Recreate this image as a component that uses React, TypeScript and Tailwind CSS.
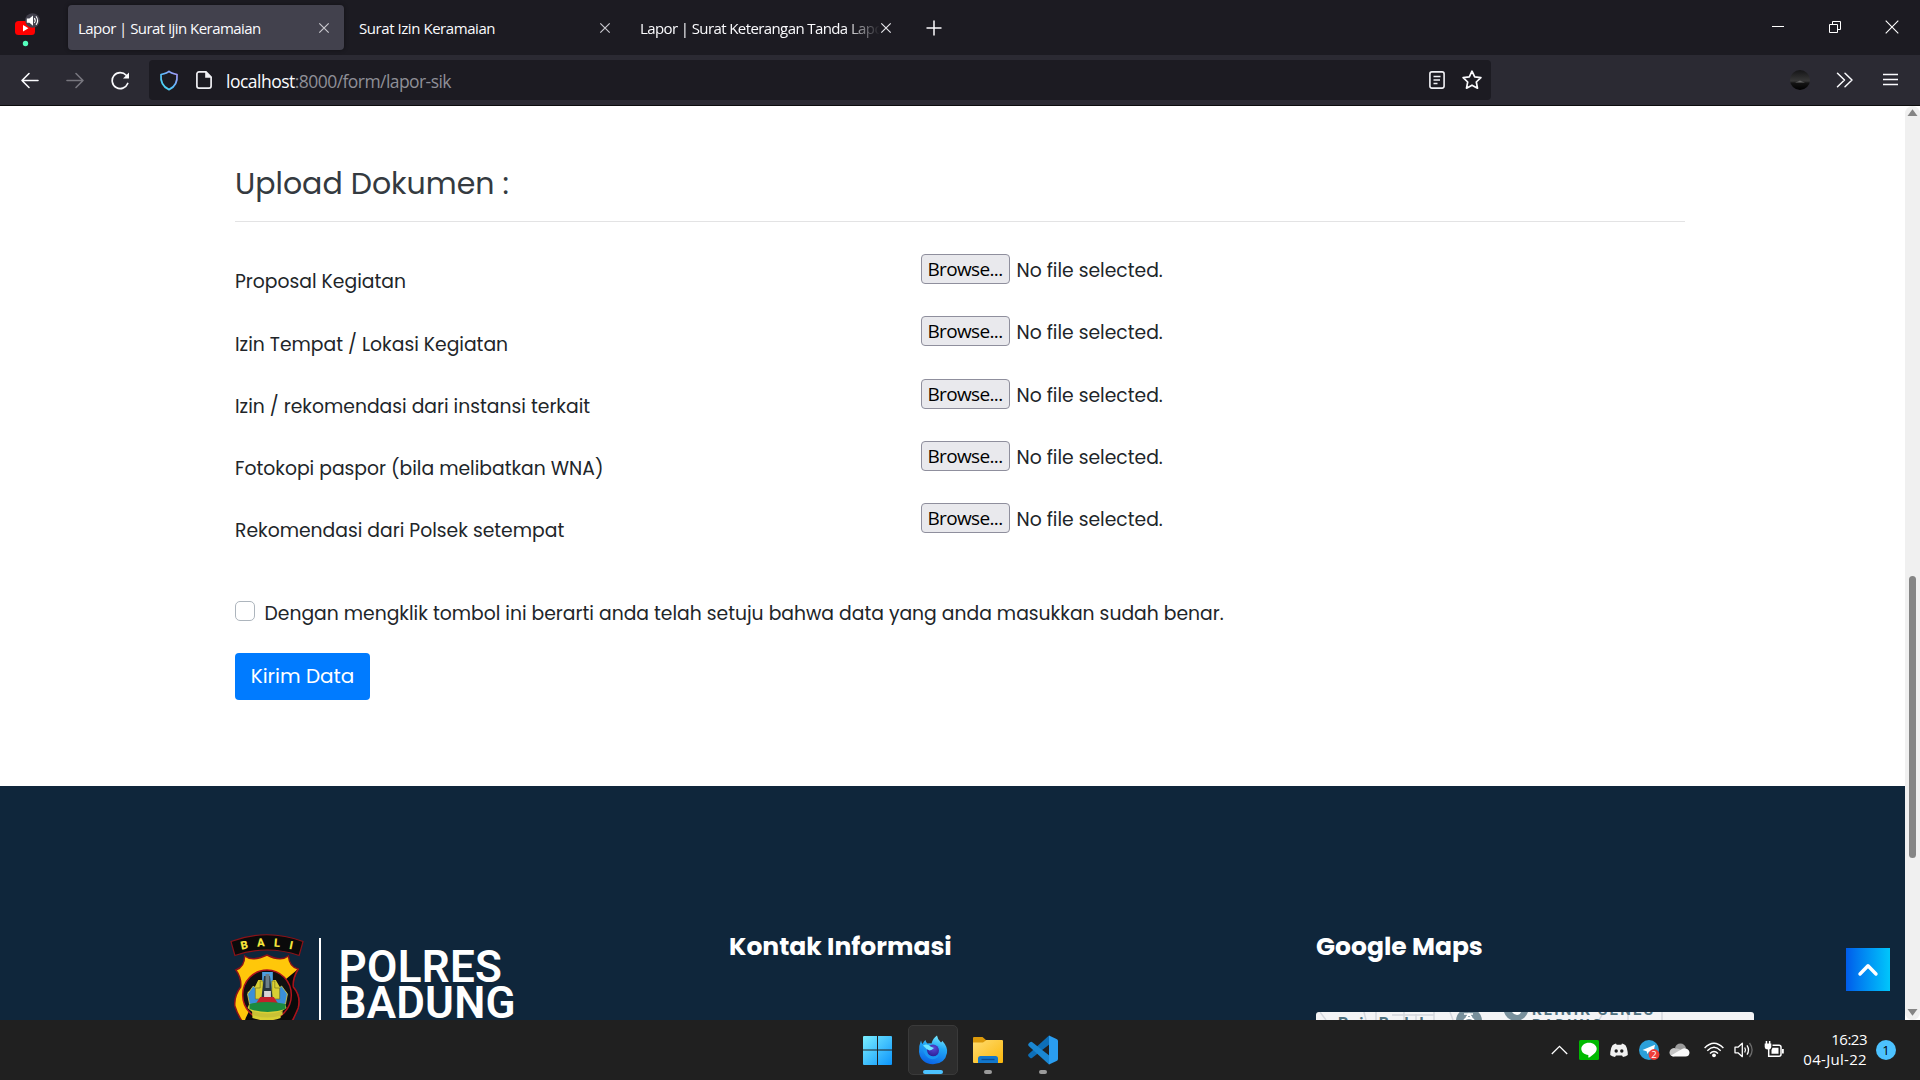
import type { ReactNode } from "react";

const pageFont = "font-['Poppins',Inter,sans-serif]";
const uiFont = "font-['Open_Sans','Noto_Sans',sans-serif]";

function CloseIcon({ className = "" }: { className?: string }) {
  return (
    <svg width="12" height="12" viewBox="0 0 12 12" className={className} fill="none" stroke="currentColor" strokeWidth="1.2">
      <path d="M1.3 1.3 10.7 10.7M10.7 1.3 1.3 10.7" />
    </svg>
  );
}

function TabBar() {
  return (
    <div className={`flex h-[55px] items-start bg-[#1c1b22] pt-[5px] text-[15px] leading-[45px] text-[#fbfbfe] ${uiFont}`}>
      <div className="flex h-[45px] w-[68px] shrink-0 pl-[14px]">
        <svg width="28" height="45" viewBox="0 0 28 45">
          <rect x="1" y="16" width="20" height="14" rx="3.5" fill="#f00" />
          <path d="M9 20v6.4l5.4-3.2z" fill="#fff" />
          <circle cx="18.5" cy="15.5" r="7.3" fill="#42414d" />
          <path d="M12.8 13.4h2.6l3.6-3v10.4l-3.6-3h-2.6z" fill="#fff" />
          <path d="M20.3 13.2q1.8 2.4 0 4.8M22 11.2q3.2 4.4 0 8.7" fill="none" stroke="#fff" strokeWidth="1.1" />
          <circle cx="11.5" cy="38.5" r="2.7" fill="#54ffbd" />
        </svg>
      </div>
      <div className="flex h-[45px] w-[276px] shrink-0 items-center rounded-[4px] bg-[#42414d] pl-[10px] pr-[14px] shadow-[0_0_4px_rgba(0,0,0,0.4)]">
        <span className="flex-1 whitespace-nowrap pt-[2px] tracking-[-0.55px]">Lapor | Surat Ijin Keramaian</span>
        <CloseIcon className="text-[#c9c8ce]" />
      </div>
      <div className="flex h-[45px] w-[281px] shrink-0 items-center pl-[15px] pr-[14px]">
        <span className="flex-1 whitespace-nowrap pt-[2px] tracking-[-0.44px]">Surat Izin Keramaian</span>
        <CloseIcon className="text-[#c9c8ce]" />
      </div>
      <div className="flex h-[45px] w-[267px] shrink-0 items-center pl-[15px]">
        <span className="w-[240px] overflow-hidden whitespace-nowrap pt-[2px] tracking-[-0.6px] [mask-image:linear-gradient(to_right,black_205px,transparent_240px)]">
          Lapor | Surat Keterangan Tanda Lapor
        </span>
        <CloseIcon className="ml-px shrink-0 text-[#e6e6ea]" />
      </div>
      <div className="flex h-[45px] flex-1 items-center pl-[34px]">
        <svg width="16" height="16" viewBox="0 0 16 16" stroke="#fbfbfe" strokeWidth="1.5">
          <path d="M8 .5v15M.5 8h15" />
        </svg>
      </div>
      <div className="flex h-[44px] items-center gap-[44.5px] pr-[21px]">
        <svg width="12" height="14" viewBox="0 0 12 14" stroke="#fff"><path d="M0 6.5h12" /></svg>
        <svg width="12" height="14" viewBox="0 0 12 14" fill="none" stroke="#fff">
          <path d="M.5 4.5h8v8h-8zM3.500 4.500v-3h8v8h-3" />
        </svg>
        <svg width="14" height="14" viewBox="0 0 14 14" stroke="#fff" strokeWidth="1.1"><path d="M.7.7 13.300 13.300M13.300.7.7 13.300" /></svg>
      </div>
    </div>
  );
}

function Toolbar() {
  return (
    <div className={`flex h-[51px] items-center border-b border-[#0c0c0d] bg-[#2b2a33] ${uiFont}`}>
      <div className="flex w-[149px] shrink-0 items-center gap-[25.5px] pl-[20px]">
        <svg width="20" height="20" viewBox="0 0 20 20" fill="none" stroke="#fbfbfe" strokeWidth="1.6" strokeLinecap="round" strokeLinejoin="round">
          <path d="M18 10.500H2M9 3.500 2 10.500l7 7" />
        </svg>
        <svg width="20" height="20" viewBox="0 0 20 20" fill="none" stroke="#77767e" strokeWidth="1.6" strokeLinecap="round" strokeLinejoin="round">
          <path d="M1 10.500h16M10 3.500l7 7-7 7" />
        </svg>
        <svg width="20" height="20" viewBox="0 0 20 20" fill="none" stroke="#fbfbfe" strokeWidth="1.7" strokeLinecap="round">
          <path d="M15.200 5.300A8 8 0 1 0 16.700 13.500" />
          <path d="M18 2.500v6h-6z" fill="#fbfbfe" stroke="none" />
        </svg>
      </div>
      <div className="flex h-[40px] w-[1342px] shrink-0 items-center rounded-[4px] bg-[#1c1b22] pl-[10px] pr-[8px]">
        <svg width="20" height="21" viewBox="0 0 20 21" fill="none">
          <defs>
            <linearGradient id="shield" x1="0" y1="1" x2="1" y2="0">
              <stop offset="0" stopColor="#3fe1f0" />
              <stop offset=".5" stopColor="#5fb8fb" />
              <stop offset="1" stopColor="#b094f7" />
            </linearGradient>
          </defs>
          <path d="M10 1.300Q11.500 3.200 18 4.500C18.700 12 16 17 10 19.600C4 17 1.300 12 2 4.500Q8.500 3.200 10 1.300Z" stroke="url(#shield)" strokeWidth="1.700" strokeLinejoin="round" />
        </svg>
        <svg width="16" height="18" viewBox="0 0 16 18" className="ml-[17px]" fill="none">
          <path d="M3 .9h7l5.100 5.100v9a2.100 2.100 0 0 1-2.100 2.100H3A2.100 2.100 0 0 1 .9 15V3A2.100 2.100 0 0 1 3 .9Z" stroke="#f0f0f4" strokeWidth="1.700" />
          <path d="M9.200 0v6.800H16Z" fill="#f0f0f4" />
        </svg>
        <div className="ml-[14px] flex flex-1 whitespace-nowrap pt-[3px] text-[17.500px] leading-[37px]">
          <span className="tracking-[-0.5px] text-[#fbfbfe]">localhost</span>
          <span className="tracking-[-0.56px] text-[#8f8f97]">:8000/form/lapor-sik</span>
        </div>
        <svg width="16" height="18" viewBox="0 0 16 18" fill="none" stroke="#f0f0f4">
          <rect x=".9" y=".9" width="14.200" height="16.200" rx="2" strokeWidth="1.600" />
          <path d="M4.500 5.500h7M4.500 9h6.500M4.500 12.500h4" strokeWidth="1.400" />
        </svg>
        <svg width="22" height="22" viewBox="0 0 22 22" fill="none" className="ml-[16px]">
          <path d="m11 2.200 2.700 5.700 6.200.8-4.600 4.300 1.200 6.200L11 16.200l-5.500 3 1.200-6.200L2.100 8.700l6.200-.8Z" stroke="#fbfbfe" strokeWidth="1.700" strokeLinejoin="round" />
        </svg>
      </div>
      <div className="flex flex-1 items-center justify-end pr-[22px]">
        <svg width="20" height="20" viewBox="0 0 20 20">
          <defs>
            <linearGradient id="dusk" x1="0" y1="0" x2="0" y2="1">
              <stop offset="0" stopColor="#151517" />
              <stop offset=".55" stopColor="#383838" />
              <stop offset=".65" stopColor="#141414" />
              <stop offset="1" stopColor="#000" />
            </linearGradient>
          </defs>
          <circle cx="10" cy="10" r="10" fill="url(#dusk)" />
          <path d="M5 12.500 8 11.500 10 10.500 12 11.500 15 12.500Z" fill="#666" />
        </svg>
        <svg width="18" height="16" viewBox="0 0 18 16" fill="none" stroke="#fbfbfe" strokeWidth="1.500" strokeLinejoin="round" strokeLinecap="round" className="ml-[26px]">
          <path d="m1.500 1.200 7 6.800-7 6.800M9 1.200 16 8l-7 6.800" />
        </svg>
        <svg width="15" height="14" viewBox="0 0 15 14" stroke="#fbfbfe" strokeWidth="1.400" className="ml-[29px]">
          <path d="M0 1.500h15M0 6.500h15M0 11.500h15" />
        </svg>
      </div>
    </div>
  );
}

const documents = [
  "Proposal Kegiatan",
  "Izin Tempat / Lokasi Kegiatan",
  "Izin / rekomendasi dari instansi terkait",
  "Fotokopi paspor (bila melibatkan WNA)",
  "Rekomendasi dari Polsek setempat",
];

function UploadForm() {
  return (
    <main className="h-[680px] bg-white pl-[235px] pt-[60px] text-[18.75px] leading-[30px] text-[#212529]">
      <div className="w-[1450px]">
        <h2 className="h-[56px] border-b border-[#e3e3e4] text-[30px] leading-[36px] text-[#343a40]">Upload Dokumen :</h2>
        <div className="mt-[32px]">
          {documents.map((label) => (
            <div key={label} className="flex h-[62.25px] items-start">
              <div className="w-[686px] pt-[13.4px]">{label}</div>
              <button className={`h-[30px] w-[89px] rounded-[4px] border border-[#8f8f9d] bg-[#e9e9ed] pr-px text-[19px] leading-[28px] tracking-[-0.65px] text-black ${uiFont}`}>
                Browse...
              </button>
              <span className="ml-[6.5px] pt-[2px]">No file selected.</span>
            </div>
          ))}
        </div>
        <label className="mt-[33px] flex items-start">
          <span className="mt-[3px] size-[20px] rounded-[5px] border border-[#adb5bd] bg-white" />
          <span className="ml-[9.500px] whitespace-nowrap pt-px">
            Dengan mengklik tombol ini berarti anda telah setuju bahwa data yang anda masukkan sudah benar.
          </span>
        </label>
        <button className="mt-[24px] block h-[47px] w-[135px] rounded-[4px] bg-[#007bff] pb-[2px] text-[20px] leading-[44px] text-white">
          Kirim Data
        </button>
      </div>
    </main>
  );
}

function Crest() {
  return (
    <svg width="74" height="86" viewBox="0 0 76 86" preserveAspectRatio="none" className="shrink-0">
      <path d="M1 7.500Q38-6 75 7.500L71 21.500Q38 10.500 5 21.500Z" fill="#0a0a0a" stroke="#8b1218" strokeWidth="1.200" />
      <g fill="#f5e63c" fontFamily="Roboto, sans-serif" fontWeight="900" fontSize="11.500" textAnchor="middle">
        <text x="15.500" y="15" transform="rotate(-12 15.500 15)">B</text>
        <text x="32" y="12.500" transform="rotate(-4 32 12.500)">A</text>
        <text x="48" y="12.700" transform="rotate(5 48 12.700)">L</text>
        <text x="62" y="15" transform="rotate(12 62 15)">I</text>
      </g>
      <path d="M15 22Q23 28 38 21Q52 28 60 22Q61 33 70 35Q64 45 65 53Q73 62 70 74Q66 84 58 92H16Q8 82 5 72Q4 62 11 53Q12 44 6 36Q15 33 15 22Z" fill="#ffc70a" stroke="#8b1218" strokeWidth="1.500" />
      <path d="M70 35Q64 45 65 53Q73 62 70 74Q66 84 58 92H14Q16 80 24 72Z" fill="#0a0a0a" />
      <path d="M70 35Q64 45 65 53Q73 62 70 74L62 92" fill="none" stroke="#a9131b" strokeWidth="1.500" />
      <circle cx="38" cy="61" r="25" fill="#101010" stroke="#b3141c" strokeWidth="1.500" />
      <path d="M29 46h18l6 10 5 2-2 10 2 6-6 4v6q-14 5-29 0v-6l-5-4 3-7-3-9 6-2Z" fill="#d8cf34" />
      <path d="M24 52 18 60l2 10 10 2V58ZM53 52l6 8-2 10-11 2V58Z" fill="#3a8fd8" stroke="#dcd447" strokeWidth=".8" />
      <path d="M33 38h11v17H33Z" fill="#4d9fe0" />
      <path d="M26 54h5v-7h3v18h-8ZM51 54h-5v-7h-3v18h8Z" fill="#d8cf34" stroke="#6e6a18" strokeWidth=".6" />
      <path d="M35 42h6l3 24H32Z" fill="#26343e" />
      <path d="M36.500 40h4v14h-4Z" fill="#6c7f8a" />
      <path d="M35 57h7v7h-7Z" fill="#d9d5d5" />
      <path d="M31 63h14l4 6H27Z" fill="#c3202a" />
      <path d="M20 70q18-4 37 0v5q-18 6-37 0Z" fill="#1c8a3e" />
      <path d="M23 77q15 5 31 0v4q-16 5-31 0Z" fill="#c9c135" />
    </svg>
  );
}

function MapStrip() {
  return (
    <svg width="438" height="8" viewBox="0 0 438 8">
      <path d="M3 0H435a3 3 0 0 1 3 3V8H0V3A3 3 0 0 1 3 0Z" fill="#f3f4f6" />
      <path d="M4 0 10 8M48 0l2 8M60 0v8M76 3h42M88 0v8M100 2v6M118 0v8M134 0l3 8M286 3l-3 5M312 0v8M346 0v8" stroke="#d5d8de" strokeWidth="1.500" fill="none" />
      <g fontFamily="Roboto, sans-serif" fontWeight="700" fill="#4e7180">
        <text x="22" y="17" fontSize="16" textLength="90">Puja Baduk</text>
        <text x="216" y="2.500" fontSize="15" textLength="121">KLINIK SENES</text>
        <text x="216" y="17.500" fontSize="15" textLength="70">BADUNG</text>
      </g>
      <circle cx="153" cy="9" r="13" fill="#78909c" />
      <path d="M148 2h9M150 6l3-4 3 4M148 8q5-4 10 0" stroke="#fff" strokeWidth="1.700" fill="none" />
      <path d="M188 0h24q-3 8-11 9-10 0-13-9Z" fill="#78909c" />
      <path d="M196 0h9q-1 3-4 3t-5-3Z" fill="#fff" />
    </svg>
  );
}

function Footer() {
  return (
    <footer className="relative flex h-[234px] overflow-hidden bg-[#0f263b] text-white">
      <div className="flex w-[729px] shrink-0 pl-[230px] pt-[148px]">
        <Crest />
        <div className="ml-[14.500px] mt-[4px] h-[90px] w-[2.500px] shrink-0 bg-white" />
        <div className="ml-[17.500px] mt-[15px] font-['Roboto',sans-serif] text-[44px] font-semibold leading-[36px]">
          <div className="tracking-[0.3px]">POLRES</div>
          <div className="tracking-[0.200px]">BADUNG</div>
        </div>
      </div>
      <h3 className="w-[587px] shrink-0 pt-[146px] text-[25px] font-bold leading-[30px]">Kontak Informasi</h3>
      <div className="w-[438px] shrink-0 pt-[146px]">
        <h3 className="text-[25px] font-bold leading-[30px]">Google Maps</h3>
        <div className="mt-[50px]">
          <MapStrip />
        </div>
      </div>
      <button className="absolute right-[15px] top-[162px] flex h-[43px] w-[44px] items-center justify-center bg-linear-to-r from-[#005bea] to-[#00c6fb]">
        <svg width="22" height="14" viewBox="0 0 22 14" fill="none" stroke="#fff" strokeWidth="3.400" strokeLinecap="round" strokeLinejoin="round">
          <path d="m3 11 8-8.300L19 11" />
        </svg>
      </button>
    </footer>
  );
}

function Scrollbar() {
  return (
    <div className="flex w-[15px] shrink-0 flex-col items-center rounded-full bg-[#f0f0f0]">
      <svg width="11" height="14" viewBox="0 0 11 14"><path d="M.5 10 5.500 3.300 10.500 10Z" fill="#858585" /></svg>
      <div className="mt-[456px] h-[282px] w-[7px] rounded-full bg-[#858585]" />
      <div className="flex-1" />
      <svg width="11" height="14" viewBox="0 0 11 14"><path d="M.5 3 5.500 9.700 10.500 3Z" fill="#858585" /></svg>
    </div>
  );
}

function TaskIcon({ children, active = false, indicator }: { children: ReactNode; active?: boolean; indicator?: string }) {
  return (
    <div className={`flex h-[50px] w-[50px] flex-col items-center rounded-[5px] border pt-[9px] ${active ? "border-[#3a3a3a] bg-[#2d2d2d]" : "border-transparent"}`}>
      <div className="h-[30px]">{children}</div>
      {indicator && <div className={`mt-[5px] h-[4px] rounded-full ${indicator}`} />}
    </div>
  );
}

function Taskbar() {
  return (
    <div className={`flex h-[60px] items-start bg-[#202020] text-white ${uiFont}`}>
      <div className="flex flex-1 gap-[5px] pl-[853px] pt-[5px]">
        <TaskIcon>
          <svg width="30" height="30" viewBox="0 0 30 30">
            <defs>
              <linearGradient id="win" gradientUnits="userSpaceOnUse" x1="0" y1="0" x2="30" y2="30">
                <stop offset="0" stopColor="#7cf0ff" />
                <stop offset="1" stopColor="#0a93fb" />
              </linearGradient>
            </defs>
            <path d="M0 2q0-1 1-1H14V14.500H0ZM15 1H28q1 0 1 1V14.500H15ZM0 15.500H14V30H1q-1 0-1-1ZM15 15.500H29V29q0 1-1 1H15Z" fill="url(#win)" />
          </svg>
        </TaskIcon>
        <TaskIcon active indicator="w-[20px] bg-[#4cc2ff]">
          <svg width="30" height="30" viewBox="0 0 30 30">
            <defs>
              <linearGradient id="fx" x1=".7" y1="0" x2=".4" y2="1">
                <stop offset="0" stopColor="#7cecff" />
                <stop offset=".4" stopColor="#22a8f5" />
                <stop offset="1" stopColor="#0a63e6" />
              </linearGradient>
              <radialGradient id="globe" cx=".55" cy=".3" r=".7">
                <stop offset="0" stopColor="#5a48d6" />
                <stop offset="1" stopColor="#2a1f96" />
              </radialGradient>
            </defs>
            <path d="M3 5.500Q3.500 7.500 4.500 9 6 6 7.500 5 7.700 7 9.500 8.500 12 8 13.500 8.500 15 3 19 .5 19.500 4.500 23 7.500 24 7 24.200 5.800 30 12 29 18 27 29 15 29.300 2.500 28.500 1 17 .5 11 3 5.500Z" fill="url(#fx)" />
            <circle cx="15" cy="15.500" r="6" fill="url(#globe)" />
            <path d="M4.500 12Q7 16 9 16 9.500 20.500 15 21.500 19.500 21.500 21.500 18.500 20 25 13 24 6 22 4.500 12Z" fill="#1a96f2" />
            <path d="M5 10.500Q9 8 12.500 11.500L16 13Q14 15 11.500 15.500 8 14 5 10.500Z" fill="#6fe6ff" />
          </svg>
        </TaskIcon>
        <TaskIcon indicator="w-[8px] bg-[#9a9a9a]">
          <svg width="30" height="30" viewBox="0 0 30 30">
            <defs>
              <linearGradient id="folder" x1="0" y1="0" x2="1" y2="1">
                <stop offset="0" stopColor="#ffdc70" />
                <stop offset="1" stopColor="#fbb70b" />
              </linearGradient>
            </defs>
            <path d="M0 3q0-1 1-1H9.500L13 5H22V13H0Z" fill="#dc9a0b" />
            <path d="M0 7.500H10L13.500 5H29q1 0 1 1V27q0 1-1 1H1q-1 0-1-1Z" fill="url(#folder)" />
            <path d="M5 28V23.500Q5 21 7.500 21h15Q25 21 25 23.500V28Z" fill="#1277cc" />
            <path d="M8.500 24.500h13" stroke="#0a4d94" strokeWidth="1.300" />
          </svg>
        </TaskIcon>
        <TaskIcon indicator="w-[8px] bg-[#9a9a9a]">
          <svg width="30" height="30" viewBox="0 0 30 30">
            <path d="M.7 19 21 .5 22.500 8.500 4 23Q3 23.700 2 22.800L.7 21.500Q-.4 20.200.7 19Z" fill="#0d6fb8" />
            <path d="M.7 11 21 29.500 22.500 21.500 4 7Q3 6.300 2 7.200L.7 8.500Q-.4 9.800.7 11Z" fill="#1a87d2" />
            <path d="M21 .5 28.500 4Q30 4.700 30 6V24q0 1.300-1.500 2L21 29.500Z" fill="#2a9df0" />
          </svg>
        </TaskIcon>
      </div>
      <div className="flex h-[60px] items-center">
        <svg width="17" height="10" viewBox="0 0 17 10" fill="none" stroke="#fff" strokeWidth="1.300"><path d="m.8 9 7.700-7.700L16.200 9" /></svg>
        <svg width="20" height="20" viewBox="0 0 20 20" className="ml-[11px]">
          <rect width="20" height="20" rx="1.500" fill="#00b900" />
          <path d="M10 2.700c4.300 0 7.700 2.600 7.700 6.100 0 3.800-4.500 6.800-7.500 8.700-.8.400-1-.1-.9-.9l.1-1.600C5.300 14.700 2.300 12.200 2.300 8.800 2.300 5.300 5.700 2.700 10 2.700Z" fill="#fff" />
        </svg>
        <svg width="18" height="14" viewBox="0 0 18 14" className="ml-[11px]">
          <path d="M6 .5 4 1.200Q2 2 1.200 5 .2 8.500.2 12 2 13.700 5 14l1-1.500h6l1 1.500q3-.3 4.800-2 0-3.500-1-7Q16 2 14 1.200L12 .5l-.7 1.200H6.700Z" fill="#f1f1f1" />
          <circle cx="6.200" cy="8" r="1.700" fill="#202020" />
          <circle cx="11.800" cy="8" r="1.700" fill="#202020" />
        </svg>
        <svg width="21" height="20" viewBox="0 0 21 20" className="ml-[11px]">
          <circle cx="10" cy="10" r="10" fill="#2ba0da" />
          <path d="M3.500 10 16 4.800 14.300 13 10 11.500 8.500 14 7.600 11.200Z" fill="#fff" />
          <circle cx="15" cy="14.500" r="5.400" fill="#ee3d38" />
          <text x="15" y="18" fontSize="9.500" textAnchor="middle" fill="#fff" fontFamily="Open Sans, sans-serif">2</text>
        </svg>
        <svg width="21" height="14" viewBox="0 0 21 14" className="ml-[9px]">
          <path d="M6 5Q7 .5 11.500.5 15.500.5 17 5L12 10Z" fill="#9b9b9b" />
          <path d="M4.500 13.500Q.5 13 .5 9.500.8 5.500 5 5L10 6 16 9Z" fill="#c6c6c6" />
          <path d="M2 12.500 13 6Q15 4.800 17 5.500 20.500 6.500 20.500 10q-.5 3.500-4 3.500H5Q3 13.500 2 12.500Z" fill="#fafafa" />
        </svg>
        <svg width="20" height="16" viewBox="0 0 20 16" className="ml-[14px]" fill="none" stroke="#fff" strokeWidth="1.400">
          <path d="M.6 6Q10-3.500 19.400 6M3.300 8.700Q10 2 16.700 8.700M6 11.400Q10 7.400 14 11.400" />
          <circle cx="10" cy="13.300" r="1.900" fill="#fff" stroke="none" />
        </svg>
        <svg width="21" height="18" viewBox="0 0 21 18" className="ml-[10px]" fill="none" stroke="#fff" strokeWidth="1.300">
          <path d="M1 6.200H4L8.300 2.300V15.700L4 11.800H1Z" strokeLinejoin="round" />
          <path d="M10.700 6.500q1.600 2.500 0 5M13 4.300q3 4.700 0 9.400" />
          <path d="M15.500 2q5.200 7 0 14" stroke="#6b6b6b" />
        </svg>
        <svg width="21" height="18" viewBox="0 0 21 18" className="ml-[9px]" fill="none" stroke="#fff" strokeWidth="1.500">
          <path d="M8.500 4.200H15q2 0 2 2v7q0 2-2 2H4.700V8" />
          <path d="M18 8v4.500h1.800V8Z" fill="#fff" stroke="none" />
          <path d="M8.500 6.700h6v6h-7V9Z" fill="#fff" stroke="none" />
          <path d="M.7 2.500h6.600V6Q7 8.500 4 8.500T.7 6ZM1.700 0h1.500v3H1.700ZM4.900 0h1.500v3H4.900Z" fill="#fff" stroke="none" />
        </svg>
        <div className="ml-[18px] w-[64px] pb-[3px] text-right text-[15px] leading-[20px]">
          <div className="tracking-[-0.5px]">16:23</div>
          <div className="whitespace-nowrap tracking-[0.3px]">04-Jul-22</div>
        </div>
        <div className="ml-[9px] mr-[24px] size-[20px] rounded-full bg-[#4cc2ff] text-center text-[13px] leading-[20px] text-black">1</div>
      </div>
    </div>
  );
}

export default function App() {
  return (
    <div className="flex h-[1080px] w-[1920px] flex-col overflow-hidden bg-white">
      <TabBar />
      <Toolbar />
      <div className={`flex h-[914px] ${pageFont}`}>
        <div className="w-[1905px]">
          <UploadForm />
          <Footer />
        </div>
        <Scrollbar />
      </div>
      <Taskbar />
    </div>
  );
}
